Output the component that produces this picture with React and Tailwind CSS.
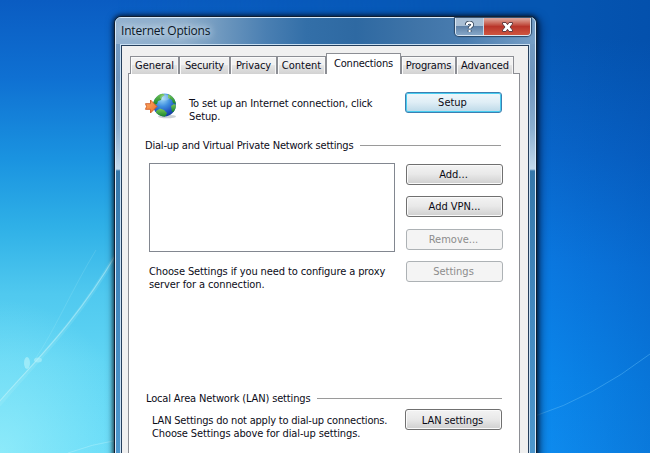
import React from "react";

function Desktop() {
  return (
    <svg className="absolute inset-0" width="650" height="453" viewBox="0 0 650 453">
      <defs>
        <linearGradient id="left" x1="0" y1="0" x2="0" y2="1">
          <stop offset="0" stopColor="#0a5cc2" />
          <stop offset="0.17" stopColor="#0f70d2" />
          <stop offset="0.35" stopColor="#1a93e0" />
          <stop offset="0.5" stopColor="#2fb0e7" />
          <stop offset="0.65" stopColor="#50c9ef" />
          <stop offset="0.8" stopColor="#60d5f4" />
          <stop offset="1" stopColor="#66dbf8" />
        </linearGradient>
        <linearGradient id="right" x1="0.1" y1="0" x2="0" y2="1">
          <stop offset="0" stopColor="#0556b2" />
          <stop offset="0.25" stopColor="#0864c8" />
          <stop offset="0.5" stopColor="#0a77df" />
          <stop offset="0.75" stopColor="#0a85ea" />
          <stop offset="1" stopColor="#0f8df0" />
        </linearGradient>
        <linearGradient id="fade" x1="0" y1="0" x2="1" y2="0">
          <stop offset="0.18" stopColor="#fff" stopOpacity="0" />
          <stop offset="0.8" stopColor="#fff" />
        </linearGradient>
        <radialGradient id="glow" cx="0" cy="1" r="0.34">
          <stop offset="0" stopColor="#a6f4fb" stopOpacity="0.6" />
          <stop offset="1" stopColor="#a6f4fb" stopOpacity="0" />
        </radialGradient>
        <linearGradient id="shade" x1="0" y1="0" x2="1" y2="0">
          <stop offset="0" stopColor="#003e9a" stopOpacity="0" />
          <stop offset="1" stopColor="#003e9a" stopOpacity="0.22" />
        </linearGradient>
        <mask id="m"><rect width="650" height="453" fill="url(#fade)" /></mask>
      </defs>
      <rect width="650" height="453" fill="url(#left)" />
      <rect width="650" height="453" fill="url(#right)" mask="url(#m)" />
      <rect width="400" height="453" fill="url(#glow)" />
      <rect x="550" width="100" height="453" fill="url(#shade)" />
      <g fill="none" stroke="#c9f6fb">
        <path d="M-2 406C35 362 76 325 118 251" strokeWidth="4" opacity=".14" />
        <path d="M-2 403C35 361 76 323 118 251" strokeWidth="1.1" opacity=".5" />
        <path d="M34 361C55 330 70 293 96 250" opacity=".15" />
        <path d="M68 453Q92 444 118 440" opacity=".35" />
        <path d="M535 416Q592 398 650 354" stroke="#55b5f5" opacity=".5" />
      </g>
      <ellipse cx="27" cy="363" rx="3" ry="6" fill="#b4f3fa" opacity=".65" />
      <ellipse cx="38" cy="360" rx="4" ry="2.5" fill="#b4f3fa" opacity=".55" />
    </svg>
  );
}

function Globe() {
  return (
    <svg width="34" height="30" viewBox="0 0 34 30" className="shrink-0">
      <defs>
        <radialGradient id="sea" cx=".4" cy=".22" r=".85">
          <stop offset="0" stopColor="#a4dcf8" />
          <stop offset=".4" stopColor="#3f8fe0" />
          <stop offset=".75" stopColor="#1f50be" />
          <stop offset="1" stopColor="#0e3590" />
        </radialGradient>
        <linearGradient id="land" x1="0" y1="0" x2="0" y2="1">
          <stop offset="0" stopColor="#7cc85a" />
          <stop offset="1" stopColor="#128428" />
        </linearGradient>
        <linearGradient id="arrow" x1="0" y1="0" x2="1" y2="1">
          <stop offset="0" stopColor="#ffb06a" />
          <stop offset="1" stopColor="#ec6a26" />
        </linearGradient>
        <clipPath id="ball"><circle cx="20.5" cy="13" r="11.4" /></clipPath>
      </defs>
      <ellipse cx="23" cy="24.5" rx="9" ry="1.8" fill="#6c7a86" opacity=".35" />
      <circle cx="20.5" cy="13" r="11.4" fill="url(#sea)" />
      <g clipPath="url(#ball)" fill="url(#land)">
        <path d="M9 9Q12 3 18 1L21 3L18 5L17 8L14 9L13 12L9 13Z" />
        <path d="M12 19L16 16.5L20 18L23 21L21 25L15 25L12 22Z" />
        <path d="M24 2L29 4L32 9L32 12L29 11L28 8L24 6Z" />
        <path d="M27 14L30 12L33 14L32 19L28 20Z" />
      </g>
      <ellipse cx="21" cy="5.5" rx="5" ry="3" fill="#fff" opacity=".22" />
      <path d="M1.5 11.7H6.5V8L13 14.5L6.5 21V17.3H1.5L2.6 14.5Z" fill="url(#arrow)" stroke="#cf5a24" strokeWidth=".9" strokeLinejoin="round" />
    </svg>
  );
}

function Tab({ children, className }) {
  return (
    <div className={"box-border flex h-[18px] items-center justify-center overflow-hidden whitespace-nowrap border border-b-0 border-[#8c8e94] bg-linear-to-b from-[#f2f2f2] from-45% via-[#e5e5e5] via-50% to-[#d2d2d2] shadow-[inset_1px_1px_0_#fbfbfb,inset_-1px_0_0_#f5f5f5] " + className}>
      {children}
    </div>
  );
}

function Button({ children, kind = "normal", className = "" }) {
  const kinds = {
    normal: "border-[#707070] bg-linear-to-b from-[#f3f3f3] via-[#e9e9e9] via-48% to-[#cfcfcf] shadow-[inset_0_0_0_1px_#fafafa] text-[#0a0a14]",
    focus: "border-[#3c7fb1] bg-linear-to-b from-[#eff7fb] via-[#e0eef6] via-48% to-[#bcd9e8] shadow-[inset_0_0_0_1px_#48cdf0] text-[#0a0a14]",
    disabled: "border-[#adb2b5] bg-[#f4f4f4] text-[#8c8c8c]",
  };
  return (
    <button className={"flex h-[21px] w-[97px] shrink-0 items-center justify-center rounded-[3px] border whitespace-nowrap " + kinds[kind] + " " + className}>
      {children}
    </button>
  );
}

function Heading({ children, className, textClass }) {
  return (
    <div className={"flex items-center whitespace-nowrap " + className}>
      <span className={textClass}>{children}</span>
      <span className="h-px flex-1 bg-[#9a9a9a]" />
    </div>
  );
}

export default function App() {
  return (
    <main className="relative h-[453px] w-[650px] overflow-hidden font-['DejaVu_Sans_Condensed','DejaVu_Sans',sans-serif] text-[11px] leading-[13px] text-[#0c0c18] [font-stretch:condensed]">
      <Desktop />
      <section className="absolute left-[114px] top-[16px] h-[460px] w-[423px] rounded-[7px] border border-[#101e30] bg-[#3e7fb8] shadow-[0_0_4px_1px_rgba(0,0,0,.6),2px_3px_10px_1px_rgba(0,10,40,.6)]">
        <div className="flex h-full flex-col rounded-[6px] border border-[#d8eafa] bg-[linear-gradient(180deg,#779fc6_0px,#6d94bd_60px,#8aaed0_110px,#c3d9ec_151px,#3577aa_153px,#4389c0_300px,#4e99cf_100%)]">
          <header className="flex h-[26px] shrink-0 items-start justify-between rounded-t-[5px] bg-[linear-gradient(90deg,#93b2d0_0px,#8eaecb_70px,#6a95bd_110px,#4a7fb2_150px,#336fa8_190px,#2e69a2_240px,#3f74a8_300px,#4a7db0_350px,#779fc6_100%)]">
            <h1 className="pl-[5px] pt-[4px] font-['Open_Sans','Noto_Sans',sans-serif] text-[12px] leading-[18px] tracking-[-0.2px] text-[#0a1626] [font-stretch:normal] [text-shadow:0_0_6px_#dce9f4,0_0_8px_#dce9f4]">Internet Options</h1>
            <div className="mr-[4px] flex h-[18px] overflow-hidden rounded-b-[4px] border border-t-0 border-[#d9e6f2] shadow-[0_0_1px_1px_#294564]">
              <div className="flex w-[28px] items-center justify-center border-r border-[#c7d7e7] bg-linear-to-b from-[#a9bfd5] from-45% via-[#5f82a8] via-50% to-[#86a7c8]">
                <svg width="11" height="12" viewBox="0 0 11 12" fill="none">
                  <path d="M2.8 4C2.8 .9 8.2 .9 8.2 3.8C8.2 5.7 5.6 5.5 5.6 7.5M5.6 9V11" stroke="#35475c" strokeWidth="3.8" />
                  <path d="M2.8 4C2.8 .9 8.2 .9 8.2 3.8C8.2 5.7 5.6 5.5 5.6 7.5M5.6 9V11" stroke="#fff" strokeWidth="2.1" />
                </svg>
              </div>
              <div className="flex w-[46px] items-center justify-center bg-linear-to-b from-[#dca297] from-5% via-[#b9352a] via-50% to-[#cf5540]">
                <svg width="13" height="12" viewBox="0 0 13 12">
                  <path d="M1.5 1.5H5L6.5 3.7L8 1.5H11.5V3L9 6L11.5 9V10.5H8L6.5 8.3L5 10.5H1.5V9L4 6L1.5 3Z" fill="#fff" stroke="#643c40" strokeWidth="1" strokeLinejoin="round" />
                </svg>
              </div>
            </div>
          </header>

          <div className="ml-[4px] mr-[5px] flex min-h-0 flex-1 flex-col border border-[#c9dff2]">
            <div className="flex flex-1 flex-col border border-[#253f5c] bg-[#f0f0f0] pl-[6px] pr-[8px] pt-[7px]">
              <nav className="relative z-10 -mb-px flex h-[21px] items-end pl-[2px]">
                <Tab className="w-[49px]">General</Tab>
                <Tab className="w-[51px] tracking-[-0.2px]">Security</Tab>
                <Tab className="w-[47px] tracking-[-0.1px]">Privacy</Tab>
                <Tab className="w-[49px]">Content</Tab>
                <div className="flex h-[21px] w-[75px] items-center justify-center border border-b-0 border-[#8c8e94] bg-white pb-[2px] tracking-[-0.2px]">Connections</div>
                <Tab className="w-[55px] tracking-[-0.2px]">Programs</Tab>
                <Tab className="w-[58px] tracking-[-0.1px]">Advanced</Tab>
              </nav>
              <div className="flex flex-1 flex-col border border-[#8c8e94] bg-white">
                <div className="flex h-[63px] items-start pl-[15px] pt-[18px]">
                  <Globe />
                  <p className="w-[227px] pl-[11px] pt-[5px] tracking-[-0.12px]">
                    <span className="block whitespace-nowrap">To set up an Internet connection, click</span>
                    Setup.
                  </p>
                  <Button kind="focus" className="pr-[2px]">Setup</Button>
                </div>
                <Heading className="ml-[16px] mt-[2px] w-[356px]" textClass="w-[215px] tracking-[-0.2px]">Dial-up and Virtual Private Network settings</Heading>
                <div className="ml-[20px] mt-[11px] flex gap-[11px]">
                  <div className="h-[89px] w-[246px] border border-[#828790] bg-white" />
                  <div className="flex flex-col gap-[11px] pt-px">
                    <Button className="pr-[2px]">Add...</Button>
                    <Button>Add VPN...</Button>
                    <Button kind="disabled" className="mt-px pr-[2px]">Remove...</Button>
                    <Button kind="disabled" className="pr-[2px]">Settings</Button>
                  </div>
                </div>
                <p className="-mt-[17px] ml-[20px] w-[245px] whitespace-nowrap tracking-[-0.11px]">
                  Choose Settings if you need to configure a proxy<br />server for a connection.
                </p>
                <Heading className="ml-[17px] mt-[101px] w-[356px]" textClass="w-[171px] tracking-[-0.15px]">Local Area Network (LAN) settings</Heading>
                <div className="ml-[23px] mt-[4px] flex items-start">
                  <p className="w-[253px] whitespace-nowrap pt-[5px] tracking-[-0.2px]">
                    LAN Settings do not apply to dial-up connections.<br /><span className="tracking-[-0.12px]">Choose Settings above for dial-up settings.</span>
                  </p>
                  <Button className="pr-[2px] pt-[2px] tracking-[-0.1px]">LAN settings</Button>
                </div>
              </div>
            </div>
          </div>
        </div>
      </section>
    </main>
  );
}
